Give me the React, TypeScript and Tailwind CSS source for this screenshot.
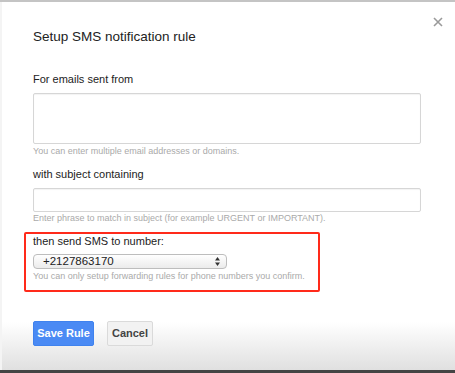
const hint = "text-[9px] leading-[11px] text-[#aaaaaa]";
const label = "text-[11px] leading-[13px] text-[#222]";
const field = "w-[388px] rounded-[2px] border border-[#d6d6d6] bg-white shadow-[inset_0_1px_1px_rgba(0,0,0,0.05)]";

const SmsRuleDialog = () => {
  return (
    <div
      className="relative flex h-[373px] w-[455px] flex-col overflow-hidden bg-white"
      style={{ fontFamily: '"Liberation Sans", Arial, sans-serif' }}
    >
      <div className="h-[2px] w-full shrink-0 bg-[#c4c4c4]" />
      <div className="flex flex-1 flex-col border-l-2 border-[#f4f4f4] bg-gradient-to-b from-white from-[87%] to-[#e0e0e0]">
        <div className="relative pl-[31px] pt-[27px]">
          <button className="absolute left-[431px] top-[15px] p-0">
            <svg width="10" height="10" viewBox="0 0 10 10">
              <path d="M1 1 L9 9 M9 1 L1 9" stroke="#9a9a9a" strokeWidth="1.6" />
            </svg>
          </button>
          <h1 className="text-[13.5px] leading-[16px] text-[#222]">Setup SMS notification rule</h1>

          <div className={`${label} mt-[28px]`}>For emails sent from</div>
          <div className={`${field} mt-[7px] h-[51px]`} />
          <div className={`${hint} mt-[2px]`}>You can enter multiple email addresses or domains.</div>

          <div className={`${label} mt-[11px]`}>with subject containing</div>
          <div className={`${field} mt-[7px] h-[24px]`} />
          <div className={`${hint} mt-[1px]`}>
            Enter phrase to match in subject (for example URGENT or IMPORTANT).
          </div>
        </div>

        <div className="ml-[22px] mt-[8px] w-[296px] rounded-[2px] border-2 border-[#ff2a1a] pb-[8px] pl-[7px] pt-[1px]">
          <div className={label}>then send SMS to number:</div>
          <div className="mt-[6px] flex h-[15px] w-[194px] items-center justify-between rounded-[4px] border border-[#bdbdbd] bg-gradient-to-b from-white to-[#ebebeb] pl-[9px] pr-[6px] text-[11.5px] leading-none text-[#222]">
            <span>+2127863170</span>
            <svg width="5" height="9" viewBox="0 0 5 9">
              <path d="M2.5 0 L5 3.5 H0 Z" fill="#333" />
              <path d="M2.5 9 L5 5.5 H0 Z" fill="#333" />
            </svg>
          </div>
          <div className={`${hint} mt-[2px]`}>
            You can only setup forwarding rules for phone numbers you confirm.
          </div>
        </div>

        <div className="ml-[31px] mt-[29px] flex gap-[13px]">
          <button className="h-[25px] w-[61px] rounded-[2px] border border-[#3f82ee] bg-[#4a8af4] text-[11px] font-bold text-white">
            Save Rule
          </button>
          <button className="h-[25px] w-[46px] rounded-[2px] border border-[#dadada] bg-[#f2f2f2] text-[11px] font-bold text-[#444]">
            Cancel
          </button>
        </div>
      </div>
      <div className="h-[3px] w-full shrink-0 bg-[#444]" />
    </div>
  );
};

export default function App() {
  return <SmsRuleDialog />;
}
